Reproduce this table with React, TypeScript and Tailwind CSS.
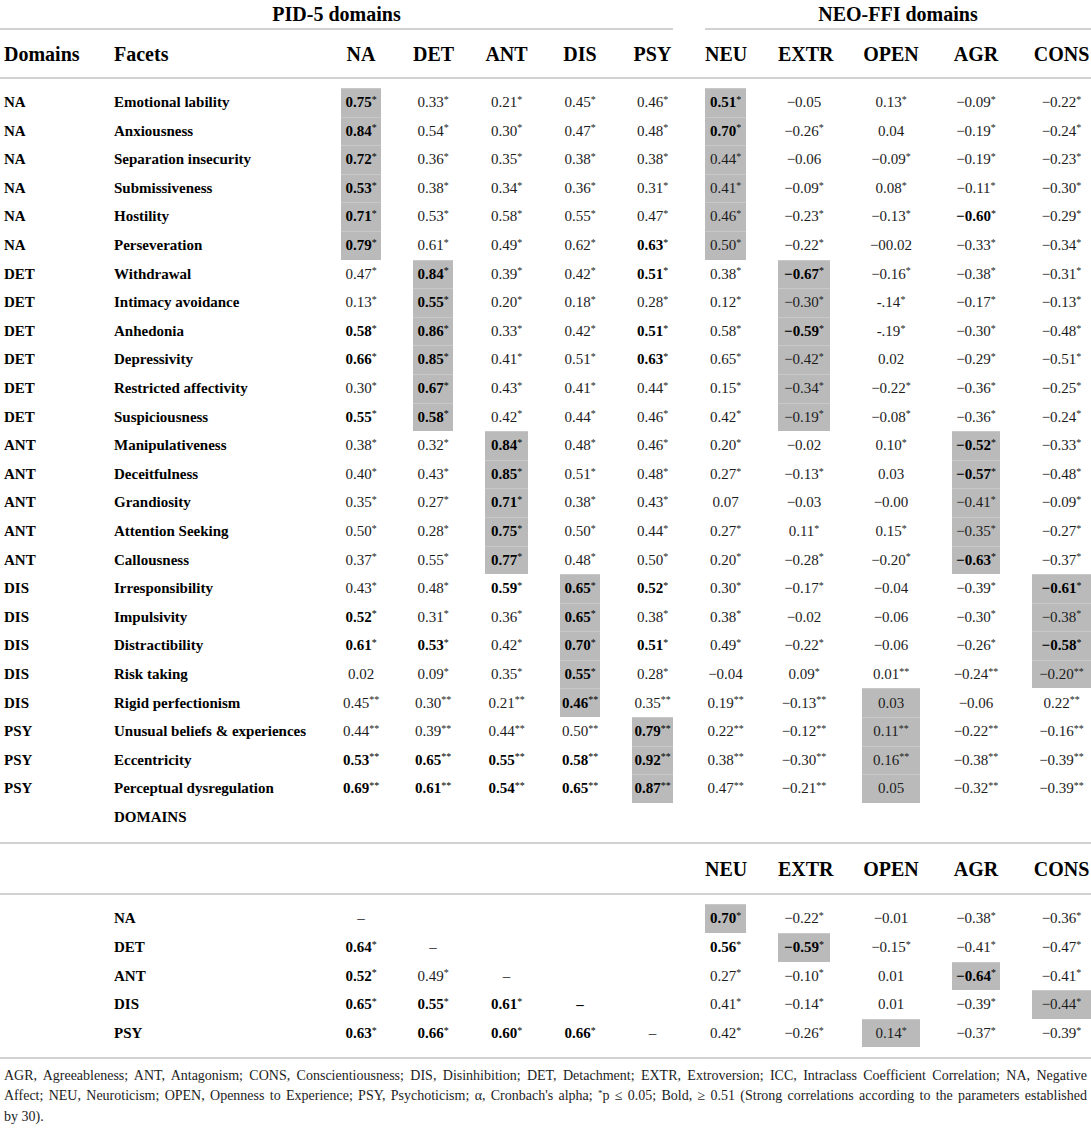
import React from "react";

const cols =
	"grid grid-cols-[82px_195px_40px_40px_43px_40px_41px_41px_52px_58px_48px_59px] gap-x-8";

const pidHeads = ["NA", "DET", "ANT", "DIS", "PSY"];
const neoHeads = ["NEU", "EXTR", "OPEN", "AGR", "CONS"];

// "#" = shaded cell, "!" = bold value
const facets: [string, string, string[]][] = [
	["NA", "Emotional lability", ["#!0.75*", "0.33*", "0.21*", "0.45*", "0.46*", "#!0.51*", "−0.05", "0.13*", "−0.09*", "−0.22*"]],
	["NA", "Anxiousness", ["#!0.84*", "0.54*", "0.30*", "0.47*", "0.48*", "#!0.70*", "−0.26*", "0.04", "−0.19*", "−0.24*"]],
	["NA", "Separation insecurity", ["#!0.72*", "0.36*", "0.35*", "0.38*", "0.38*", "#0.44*", "−0.06", "−0.09*", "−0.19*", "−0.23*"]],
	["NA", "Submissiveness", ["#!0.53*", "0.38*", "0.34*", "0.36*", "0.31*", "#0.41*", "−0.09*", "0.08*", "−0.11*", "−0.30*"]],
	["NA", "Hostility", ["#!0.71*", "0.53*", "0.58*", "0.55*", "0.47*", "#0.46*", "−0.23*", "−0.13*", "!−0.60*", "−0.29*"]],
	["NA", "Perseveration", ["#!0.79*", "0.61*", "0.49*", "0.62*", "!0.63*", "#0.50*", "−0.22*", "−00.02", "−0.33*", "−0.34*"]],
	["DET", "Withdrawal", ["0.47*", "#!0.84*", "0.39*", "0.42*", "!0.51*", "0.38*", "#!−0.67*", "−0.16*", "−0.38*", "−0.31*"]],
	["DET", "Intimacy avoidance", ["0.13*", "#!0.55*", "0.20*", "0.18*", "0.28*", "0.12*", "#−0.30*", "-.14*", "−0.17*", "−0.13*"]],
	["DET", "Anhedonia", ["!0.58*", "#!0.86*", "0.33*", "0.42*", "!0.51*", "0.58*", "#!−0.59*", "-.19*", "−0.30*", "−0.48*"]],
	["DET", "Depressivity", ["!0.66*", "#!0.85*", "0.41*", "0.51*", "!0.63*", "0.65*", "#−0.42*", "0.02", "−0.29*", "−0.51*"]],
	["DET", "Restricted affectivity", ["0.30*", "#!0.67*", "0.43*", "0.41*", "0.44*", "0.15*", "#−0.34*", "−0.22*", "−0.36*", "−0.25*"]],
	["DET", "Suspiciousness", ["!0.55*", "#!0.58*", "0.42*", "0.44*", "0.46*", "0.42*", "#−0.19*", "−0.08*", "−0.36*", "−0.24*"]],
	["ANT", "Manipulativeness", ["0.38*", "0.32*", "#!0.84*", "0.48*", "0.46*", "0.20*", "−0.02", "0.10*", "#!−0.52*", "−0.33*"]],
	["ANT", "Deceitfulness", ["0.40*", "0.43*", "#!0.85*", "0.51*", "0.48*", "0.27*", "−0.13*", "0.03", "#!−0.57*", "−0.48*"]],
	["ANT", "Grandiosity", ["0.35*", "0.27*", "#!0.71*", "0.38*", "0.43*", "0.07", "−0.03", "−0.00", "#−0.41*", "−0.09*"]],
	["ANT", "Attention Seeking", ["0.50*", "0.28*", "#!0.75*", "0.50*", "0.44*", "0.27*", "0.11*", "0.15*", "#−0.35*", "−0.27*"]],
	["ANT", "Callousness", ["0.37*", "0.55*", "#!0.77*", "0.48*", "0.50*", "0.20*", "−0.28*", "−0.20*", "#!−0.63*", "−0.37*"]],
	["DIS", "Irresponsibility", ["0.43*", "0.48*", "!0.59*", "#!0.65*", "!0.52*", "0.30*", "−0.17*", "−0.04", "−0.39*", "#!−0.61*"]],
	["DIS", "Impulsivity", ["!0.52*", "0.31*", "0.36*", "#!0.65*", "0.38*", "0.38*", "−0.02", "−0.06", "−0.30*", "#−0.38*"]],
	["DIS", "Distractibility", ["!0.61*", "!0.53*", "0.42*", "#!0.70*", "!0.51*", "0.49*", "−0.22*", "−0.06", "−0.26*", "#!−0.58*"]],
	["DIS", "Risk taking", ["0.02", "0.09*", "0.35*", "#!0.55*", "0.28*", "−0.04", "0.09*", "0.01**", "−0.24**", "#−0.20**"]],
	["DIS", "Rigid perfectionism", ["0.45**", "0.30**", "0.21**", "#!0.46**", "0.35**", "0.19**", "−0.13**", "#0.03", "−0.06", "0.22**"]],
	["PSY", "Unusual beliefs & experiences", ["0.44**", "0.39**", "0.44**", "0.50**", "#!0.79**", "0.22**", "−0.12**", "#0.11**", "−0.22**", "−0.16**"]],
	["PSY", "Eccentricity", ["!0.53**", "!0.65**", "!0.55**", "!0.58**", "#!0.92**", "0.38**", "−0.30**", "#0.16**", "−0.38**", "−0.39**"]],
	["PSY", "Perceptual dysregulation", ["!0.69**", "!0.61**", "!0.54**", "!0.65**", "#!0.87**", "0.47**", "−0.21**", "#0.05", "−0.32**", "−0.39**"]],
];

const domains: [string, string[]][] = [
	["NA", ["–", "", "", "", "", "#!0.70*", "−0.22*", "−0.01", "−0.38*", "−0.36*"]],
	["DET", ["!0.64*", "–", "", "", "", "!0.56*", "#!−0.59*", "−0.15*", "−0.41*", "−0.47*"]],
	["ANT", ["!0.52*", "0.49*", "–", "", "", "0.27*", "−0.10*", "0.01", "#!−0.64*", "−0.41*"]],
	["DIS", ["!0.65*", "!0.55*", "!0.61*", "!–", "", "0.41*", "−0.14*", "0.01", "−0.39*", "#−0.44*"]],
	["PSY", ["!0.63*", "!0.66*", "!0.60*", "!0.66*", "–", "0.42*", "−0.26*", "#0.14*", "−0.37*", "−0.39*"]],
];

const Cell = ({ raw }: { raw: string }) => {
	let v = raw;
	const shaded = v.startsWith("#");
	if (shaded) v = v.slice(1);
	const bold = v.startsWith("!");
	if (bold) v = v.slice(1);
	const m = v.match(/^(.*?)(\**)$/);
	const num = m ? m[1] : v;
	const stars = m ? m[2] : "";
	return (
		<div
			className={`h-full flex items-center justify-center whitespace-nowrap ${
				shaded ? "bg-[#bababa] shadow-[inset_0_1px_0_#c8c8c8]" : ""
			} ${bold ? "font-bold text-black" : ""}`}
		>
			{num}
			{stars && <span className="relative -top-[3px] text-[10px] font-normal">{stars}</span>}
		</div>
	);
};

const Line = () => <div className="h-[2px] bg-[#d2d2d2]" />;

export default function App() {
	return (
		<div className="w-[1091px] bg-white font-['Liberation_Serif',serif] text-[15px] text-[#1c1c1c]">
			{/* group titles */}
			<div className={cols}>
				<div className="col-span-7 h-[30px] flex items-center justify-center text-[20px] font-bold text-black border-b-2 border-[#d2d2d2]">
					PID-5 domains
				</div>
				<div className="col-start-8 col-span-5 h-[30px] flex items-center justify-center text-[20px] font-bold text-black border-b-2 border-[#d2d2d2]">
					NEO-FFI domains
				</div>
			</div>

			{/* column heads */}
			<div className={`${cols} h-[47px] items-center text-[20px] font-bold text-black`}>
				<div className="pl-1">Domains</div>
				<div>Facets</div>
				{[...pidHeads, ...neoHeads].map((h) => (
					<div key={h} className="text-center whitespace-nowrap">
						{h}
					</div>
				))}
			</div>
			<Line />

			<div className="pt-[9px] pb-[11px]">
				{facets.map(([d, f, vals]) => (
					<div key={f} className={`${cols} h-[28.6px] items-center`}>
						<div className="pl-1 font-bold text-black">{d}</div>
						<div className="font-bold text-black whitespace-nowrap">{f}</div>
						{vals.map((v, i) => (
							<Cell key={i} raw={v} />
						))}
					</div>
				))}
				<div className={`${cols} h-[28.6px] items-center`}>
					<div />
					<div className="font-bold text-black">DOMAINS</div>
				</div>
			</div>
			<Line />

			<div className={`${cols} h-[49px] items-center text-[20px] font-bold text-black`}>
				<div className="col-start-8 text-center">NEU</div>
				<div className="text-center">EXTR</div>
				<div className="text-center">OPEN</div>
				<div className="text-center">AGR</div>
				<div className="text-center whitespace-nowrap">CONS</div>
			</div>
			<Line />

			<div className="pt-[9px] pb-[10px]">
				{domains.map(([d, vals]) => (
					<div key={d} className={`${cols} h-[28.6px] items-center`}>
						<div />
						<div className="font-bold text-black">{d}</div>
						{vals.map((v, i) => (v ? <Cell key={i} raw={v} /> : <div key={i} />))}
					</div>
				))}
			</div>
			<Line />

			<div className="px-1 pt-[7px] text-[14px] leading-[20px] text-justify">
				<p className="[text-align-last:justify]">
					AGR, Agreeableness; ANT, Antagonism; CONS, Conscientiousness; DIS, Disinhibition; DET, Detachment; EXTR,
					Extroversion; ICC, Intraclass Coefficient Correlation; NA, Negative
				</p>
				<p className="[text-align-last:justify]">
					Affect; NEU, Neuroticism; OPEN, Openness to Experience; PSY, Psychoticism; α, Cronbach's alpha;{" "}
					<span className="relative -top-[4px] text-[9px]">*</span>p ≤ 0.05; Bold, ≥ 0.51 (Strong correlations
					according to the parameters established
				</p>
				<p>by 30).</p>
			</div>
		</div>
	);
}
